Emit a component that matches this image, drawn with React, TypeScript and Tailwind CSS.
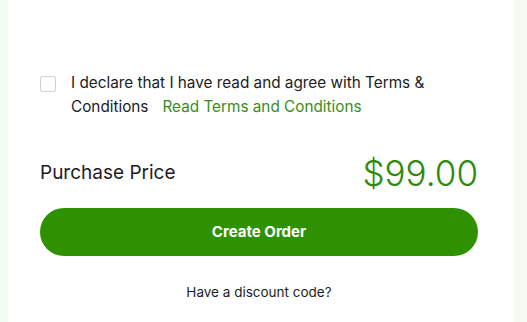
export default function App() {
  return (
    <div className="h-[322px] w-[527px] bg-[#f5faf2] pl-2 pr-[13px]" style={{ fontFamily: 'Inter, "Open Sans", sans-serif' }}>
      <div className="h-full bg-white pl-8 pr-9 pt-[71px]">
        <div className="flex gap-[15px]">
          <span className="mt-[5px] h-4 w-4 shrink-0 rounded-[3px] border border-[#cfcfcf] bg-white" />
          <p className="text-[15.3px] leading-6 text-[#1c1c24]">
            I declare that I have read and agree with Terms &amp; Conditions
            <a className="ml-[14px] text-[#3a8c1c]">Read Terms and Conditions</a>
          </p>
        </div>

        <div className="mt-[34px] flex items-center justify-between">
          <span className="text-[19px] text-[#1c1c24]">Purchase Price</span>
          <span className="text-[35px] font-light leading-10 text-[#2e8a0a]">$99.00</span>
        </div>

        <button className="mt-[15px] h-12 w-full rounded-full bg-[#2e9200] text-[15px] font-bold text-white">
          Create Order
        </button>

        <p className="mt-[26px] text-center text-[13.5px] text-[#1c1c24]">Have a discount code?</p>
      </div>
    </div>
  )
}
